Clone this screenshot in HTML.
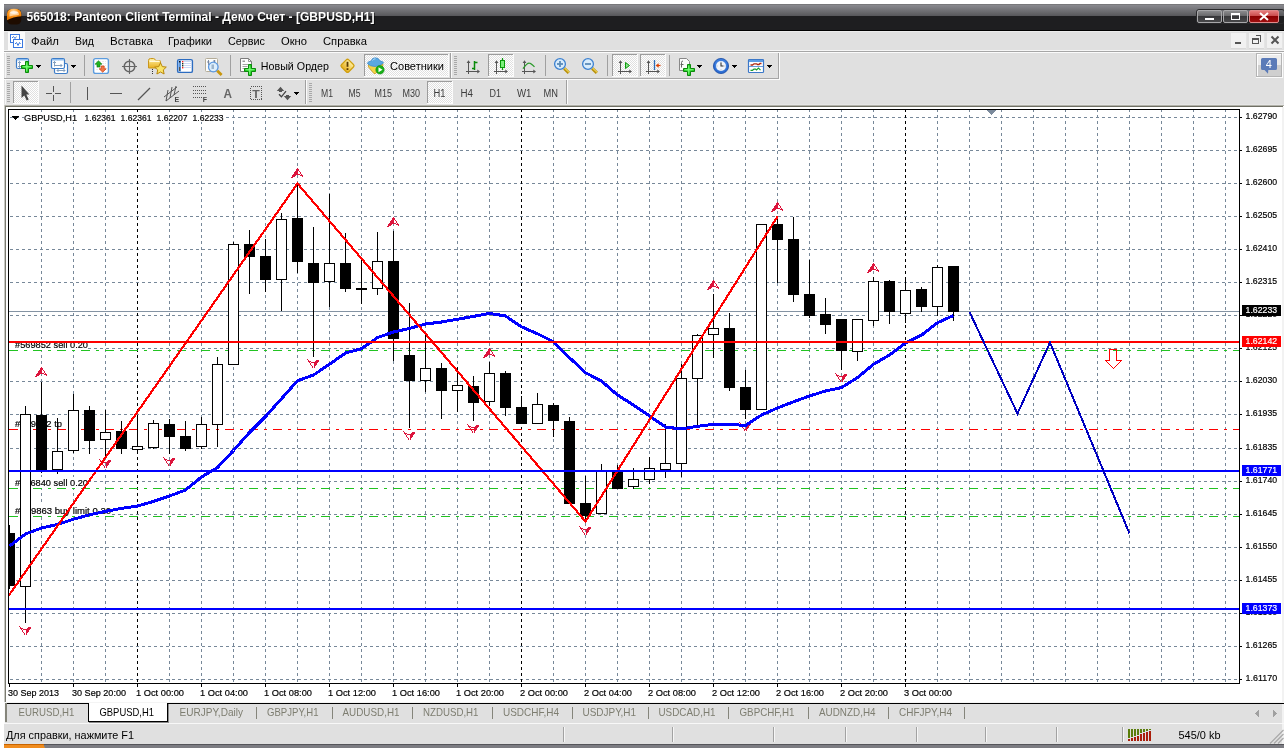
<!DOCTYPE html>
<html><head><meta charset="utf-8"><title>565018: Panteon Client Terminal - [GBPUSD,H1]</title>
<style>
html,body{margin:0;padding:0;background:#fff;width:1288px;height:748px;overflow:hidden}
svg{display:block;will-change:transform;font-family:'Liberation Sans', sans-serif;}
text{white-space:pre}
</style></head><body>
<svg width="1288" height="748" viewBox="0 0 1288 748" shape-rendering="crispEdges" font-family='"Liberation Sans", sans-serif'>
<defs>
<linearGradient id="tg" x1="0" y1="0" x2="0" y2="1">
 <stop offset="0" stop-color="#8e8e93"/><stop offset="0.5" stop-color="#737377"/><stop offset="1" stop-color="#57575a"/>
</linearGradient>
<linearGradient id="btn" x1="0" y1="0" x2="0" y2="1">
 <stop offset="0" stop-color="#8e8e90"/><stop offset="0.48" stop-color="#666668"/><stop offset="0.5" stop-color="#38383a"/><stop offset="1" stop-color="#4a4a4c"/>
</linearGradient>
<linearGradient id="btnr" x1="0" y1="0" x2="0" y2="1">
 <stop offset="0" stop-color="#e88080"/><stop offset="0.48" stop-color="#c84848"/><stop offset="0.5" stop-color="#8c0000"/><stop offset="1" stop-color="#a01010"/>
</linearGradient>
<radialGradient id="ico" cx="0.45" cy="0.2" r="0.7">
 <stop offset="0" stop-color="#ffd9a0"/><stop offset="0.5" stop-color="#ff9a20"/><stop offset="1" stop-color="#e87800"/>
</radialGradient>
<pattern id="chk" width="2" height="2" patternUnits="userSpaceOnUse">
 <rect width="2" height="2" fill="#ffffff"/><rect width="1" height="1" fill="#e0e0e0"/><rect x="1" y="1" width="1" height="1" fill="#e0e0e0"/>
</pattern>
<linearGradient id="blu" x1="0" y1="0" x2="0" y2="1"><stop offset="0" stop-color="#9cc4f0"/><stop offset="1" stop-color="#3c7ccc"/></linearGradient>
<linearGradient id="grn" x1="0" y1="0" x2="0" y2="1"><stop offset="0" stop-color="#5ce05c"/><stop offset="1" stop-color="#0a9a0a"/></linearGradient>
<linearGradient id="yel" x1="0" y1="0" x2="0" y2="1"><stop offset="0" stop-color="#fff0a0"/><stop offset="1" stop-color="#e8b020"/></linearGradient>
</defs>
<rect x="4" y="4" width="1280" height="744" fill="#e0e0e0" />
<rect x="4" y="4" width="1280" height="12" fill="url(#tg)" />
<rect x="4" y="16" width="1280" height="14" fill="#1e1e20" />
<rect x="4" y="30" width="1280" height="1" fill="#000" />
<rect x="4" y="4" width="1280" height="1" fill="#78787b" />
<g shape-rendering="auto"><rect x="7" y="9" width="14.300" height="15.500" rx="5" ry="4.500" fill="#1e0c00"/><path d="M7,20.300 V14 Q7,8.800 14,8.800 Q21.300,8.800 21.300,14 V16.300 Q13,16.800 7,20.300 Z" fill="url(#ico)"/><path d="M9.500,16.500 V13.500 Q9.500,11.300 14,11.300 Q18.800,11.300 18.800,13.500 V15 Q13,15.200 9.500,16.500 Z" fill="#fff" fill-opacity="0.550"/><ellipse cx="14" cy="12.600" rx="3.800" ry="1.300" fill="#fff" fill-opacity="0.600"/></g>
<g shape-rendering="auto">
<text x="27.5" y="22" font-size="12.5" fill="#000" textLength="348" lengthAdjust="spacingAndGlyphs" font-weight="bold" fill-opacity="0.550">565018: Panteon Client Terminal - Демо Счет - [GBPUSD,H1]</text>
<text x="26.5" y="21" font-size="12.5" fill="#fff" textLength="348" lengthAdjust="spacingAndGlyphs" font-weight="bold" >565018: Panteon Client Terminal - Демо Счет - [GBPUSD,H1]</text>
</g>
<g shape-rendering="auto">
<rect x="1196.5" y="9.500" width="88" height="14" rx="2.5" fill="none" stroke="#2a2a2c"/>
<rect x="1197.500" y="10.500" width="24" height="12" rx="1.5" fill="url(#btn)" stroke="#a8a8aa" stroke-width="1"/>
<rect x="1223.500" y="10.500" width="24" height="12" rx="1.5" fill="url(#btn)" stroke="#a8a8aa" stroke-width="1"/>
<rect x="1249.500" y="10.500" width="29" height="12" rx="1.5" fill="url(#btnr)" stroke="#e08a8a" stroke-width="1"/>
</g>
<rect x="1205" y="18" width="9" height="2" fill="#fff" />
<rect x="1231.5" y="13.500" width="8" height="6" fill="none" stroke="#fff" stroke-width="1"/>
<rect x="1231" y="13" width="9" height="2" fill="#fff" />
<g shape-rendering="auto"><path d="M1260,13 L1268,20 M1268,13 L1260,20" stroke="#fff" stroke-width="2" fill="none"/></g>
<rect x="4" y="31" width="1280" height="1" fill="#ececec" />
<rect x="8" y="32" width="17" height="18" fill="#fbfbfb" />
<g fill="#fff" stroke="#3a78e0" stroke-width="1"><rect x="10.500" y="34.500" width="9" height="8"/><rect x="13.500" y="39.500" width="9" height="8"/></g>
<g shape-rendering="auto" fill="none" stroke="#3a78e0" stroke-width="1"><path d="M15,44 l1.500,-1.500 l1.500,3 l1.500,-3 l1,1.500"/><path d="M12,38 l1.500,-1.500 l1.500,2 l1.500,-2"/></g>
<g shape-rendering="auto">
<text x="31" y="45" font-size="11" fill="#000" textLength="28" lengthAdjust="spacingAndGlyphs" >Файл</text>
<text x="75" y="45" font-size="11" fill="#000" textLength="19" lengthAdjust="spacingAndGlyphs" >Вид</text>
<text x="110" y="45" font-size="11" fill="#000" textLength="43" lengthAdjust="spacingAndGlyphs" >Вставка</text>
<text x="168" y="45" font-size="11" fill="#000" textLength="44" lengthAdjust="spacingAndGlyphs" >Графики</text>
<text x="228" y="45" font-size="11" fill="#000" textLength="37" lengthAdjust="spacingAndGlyphs" >Сервис</text>
<text x="281" y="45" font-size="11" fill="#000" textLength="26" lengthAdjust="spacingAndGlyphs" >Окно</text>
<text x="323" y="45" font-size="11" fill="#000" textLength="44" lengthAdjust="spacingAndGlyphs" >Справка</text>
</g>
<rect x="1231" y="33" width="16" height="16" fill="#f1f1f1" />
<rect x="1231" y="48" width="16" height="1" fill="#d8d8d8" />
<rect x="1246" y="33" width="1" height="16" fill="#e4e4e4" />
<rect x="1249" y="33" width="16" height="16" fill="#f1f1f1" />
<rect x="1249" y="48" width="16" height="1" fill="#d8d8d8" />
<rect x="1264" y="33" width="1" height="16" fill="#e4e4e4" />
<rect x="1267" y="33" width="16" height="16" fill="#f1f1f1" />
<rect x="1267" y="48" width="16" height="1" fill="#d8d8d8" />
<rect x="1282" y="33" width="1" height="16" fill="#e4e4e4" />
<rect x="1235" y="42" width="6" height="2" fill="#555" />
<g fill="none" stroke="#555" stroke-width="1"><path d="M1255.500,35.500 h5 v6"/><rect x="1252.500" y="38.500" width="6" height="5"/></g>
<rect x="1252" y="38" width="7" height="2" fill="#555" />
<g shape-rendering="auto"><path d="M1271.500,36.500 l7,7 M1278.500,36.500 l-7,7" stroke="#555" stroke-width="2" fill="none"/></g>
<rect x="4" y="50" width="1280" height="1" fill="#f6f6f6" />
<rect x="4" y="51" width="1280" height="1" fill="#a6a6a6" />
<rect x="4" y="52" width="1280" height="1" fill="#fbfbfb" />
<rect x="4" y="78" width="1280" height="1" fill="#a6a6a6" />
<rect x="4" y="79" width="1280" height="1" fill="#fbfbfb" />
<rect x="779" y="53" width="505" height="27" fill="#e0e0e0" />
<rect x="778" y="53" width="1" height="26" fill="#a6a6a6" />
<rect x="779" y="53" width="1" height="27" fill="#fbfbfb" />
<rect x="5" y="80" width="1" height="25" fill="#f6f6f6" />
<rect x="5" y="53" width="1" height="25" fill="#f6f6f6" />
<defs><radialGradient id="grn2" cx="0.5" cy="0.5" r="0.6"><stop offset="0" stop-color="#58f058"/><stop offset="1" stop-color="#0cb40c"/></radialGradient></defs>
<rect x="7" y="56" width="3" height="1" fill="#a8a8a8" />
<rect x="7" y="58" width="3" height="1" fill="#a8a8a8" />
<rect x="7" y="60" width="3" height="1" fill="#a8a8a8" />
<rect x="7" y="62" width="3" height="1" fill="#a8a8a8" />
<rect x="7" y="64" width="3" height="1" fill="#a8a8a8" />
<rect x="7" y="66" width="3" height="1" fill="#a8a8a8" />
<rect x="7" y="68" width="3" height="1" fill="#a8a8a8" />
<rect x="7" y="70" width="3" height="1" fill="#a8a8a8" />
<rect x="7" y="72" width="3" height="1" fill="#a8a8a8" />
<rect x="7" y="74" width="3" height="1" fill="#a8a8a8" />
<g shape-rendering="auto">
<rect x="16.500" y="58.500" width="12" height="10" rx="1.500" fill="#ffffff" stroke="#3c7cc8" stroke-width="1.200"/><rect x="17" y="59" width="11" height="1.500" fill="#8cbcf0"/><path d="M19.500,61.500 v6 M18,63 l1.500,-1.500 l1.500,1.500 M18,66 l1.500,1.500 l1.500,-1.500" stroke="#7896b8" fill="none" stroke-width="0.900"/>
<path d="M25.5,61.5 h3 v4 h4 v3 h-4 v4 h-3 v-4 h-4 v-3 h4 Z" fill="url(#grn2)" stroke="#0a8a0a" stroke-width="1"/><path d="M26.5,62.5 v9 M22.5,66.5 h9" stroke="#7dff7d" stroke-width="1" stroke-opacity="0.700" fill="none"/>
<rect x="54.500" y="63.500" width="13" height="10" rx="1.500" fill="#ffffff" stroke="#3c7cc8" stroke-width="1.200"/><path d="M57,70.500 h8 M57,70.500 l1.500,-1.500 M57,70.500 l1.500,1.500 M65,70.500 l-1.500,-1.500 M65,70.500 l-1.500,1.500" stroke="#7896b8" fill="none" stroke-width="0.900"/><rect x="51.500" y="58.500" width="13" height="10" rx="1.500" fill="#ffffff" stroke="#3c7cc8" stroke-width="1.200"/><rect x="52" y="59" width="12" height="1.500" fill="#8cbcf0"/><path d="M54.500,61.500 v5 M53,63 l1.500,-1.500 l1.500,1.500 M54.500,65.500 h7.500 M60.500,64 l1.500,1.500 l-1.500,1.500" stroke="#7896b8" fill="none" stroke-width="0.900"/>
<rect x="93.600" y="58.600" width="14.800" height="14.800" rx="2" fill="#ffffff" stroke="#5c9cde" stroke-width="1.400"/><path d="M96,61.500 h10 M96,63.500 h10 M96,65.500 h10 M96,67.500 h10 M96,69.500 h10" stroke="#e4e4e8" stroke-width="0.800" stroke-dasharray="2 1"/><path d="M98.500,60.800 l3.500,3.400 h-2 v2.800 h-3 v-2.800 h-2 Z" fill="#22b422" stroke="#0a7a0a" stroke-width="0.600"/><path d="M102.700,72.200 l3.500,-3.400 h-2 v-2.800 h-3 v2.800 h-2 Z" fill="#f07848" stroke="#d03808" stroke-width="0.700"/>
<circle cx="129.500" cy="66.500" r="5.300" fill="none" stroke="#666" stroke-width="1.500"/><path d="M129.500,59 v15 M122,66.500 h15" stroke="#666" stroke-width="1.100"/>
<path d="M148.500,60.500 q0,-2 2,-2 h3 q1.500,0 2,2 h4 q1,0 1,1 v6.500 h-12 Z" fill="url(#yel)" stroke="#c8961e" stroke-width="1"/><rect x="149.500" y="60.500" width="10" height="1.500" fill="#fffbe0"/><path d="M160.500,62.800 l1.800,3.800 l4,0.500 l-3,2.800 l0.800,4.100 l-3.600,-2 l-3.600,2 l0.800,-4.100 l-3,-2.800 l4,-0.500 Z" fill="#fae468" stroke="#b8860b" stroke-width="1"/>
<rect x="177.600" y="59.600" width="14.800" height="12.800" rx="1.500" fill="#fff" stroke="#2c6cc0" stroke-width="1.400"/><rect x="178.500" y="60.500" width="2.500" height="11" fill="#5c98e0"/><rect x="179" y="67" width="1.200" height="4" fill="#555"/><path d="M184,61.500 h7.500 M184,63.500 h7.500 M184,65.500 h7.500 M184,67.500 h7.500" stroke="#c4d4f4" stroke-width="0.900"/><rect x="182" y="61" width="1.400" height="1.400" fill="#f02020"/><rect x="182" y="63" width="1.400" height="1.400" fill="#223322"/><rect x="182" y="65" width="1.400" height="1.400" fill="#223322"/><rect x="182" y="67" width="1.400" height="1.400" fill="#f02020"/><rect x="179" y="61" width="1.400" height="1.400" fill="#111"/>
<rect x="205.500" y="58.500" width="12" height="13" rx="1" fill="#fdfdfb" stroke="#b4ac98"/><path d="M208.500,60 v5 M207,62 h2.500 M214.500,60 v4 M213,61 h2.500" stroke="#70809a" fill="none" stroke-width="0.900"/><circle cx="213.300" cy="67" r="4.800" fill="#d8ecfc" fill-opacity="0.900" stroke="#5c98e0" stroke-width="1.300"/><rect x="211.500" y="64.500" width="2.500" height="4.500" fill="#9cb4cc"/><path d="M217.300,70.800 l4.300,4.300" stroke="#c8960e" stroke-width="2.800" stroke-linecap="butt"/>
<path d="M240.500,58.500 h8 l3,3 v10 h-11 Z" fill="#fdfdfd" stroke="#7c7c7c"/><path d="M248.500,58.500 v3 h3" fill="none" stroke="#7c7c7c" stroke-width="0.800"/><rect x="242.500" y="60.500" width="2.500" height="1.500" fill="#999"/><path d="M242.500,64.500 h6 M242.500,66.500 h5 M242.500,68.500 h3" stroke="#999" stroke-width="0.900"/>
<path d="M248.5,64.5 h3 v4 h4 v3 h-4 v4 h-3 v-4 h-4 v-3 h4 Z" fill="url(#grn2)" stroke="#0a8a0a" stroke-width="1"/><path d="M249.5,65.5 v9 M245.5,69.5 h9" stroke="#7dff7d" stroke-width="1" stroke-opacity="0.700" fill="none"/>
<text x="260.8" y="70" font-size="11" fill="#000" textLength="68.2" lengthAdjust="spacingAndGlyphs" >Новый Ордер</text>
<rect x="342.400" y="60.700" width="10.200" height="10.200" rx="1.800" transform="rotate(45 347.500 65.800)" fill="url(#yel)" stroke="#d0a010" stroke-width="1.300"/><path d="M347.500,61.800 v5" stroke="#5a3a00" stroke-width="1.800"/><rect x="346.600" y="68.200" width="1.800" height="1.800" fill="#5a3a00"/>
</g>
<rect x="152" y="69" width="1" height="1" fill="#333" />
<rect x="152" y="71" width="1" height="1" fill="#333" />
<rect x="152" y="73" width="1" height="1" fill="#333" />
<rect x="36" y="65" width="5" height="1" fill="#000" />
<rect x="37" y="66" width="3" height="1" fill="#000" />
<rect x="38" y="67" width="1" height="1" fill="#000" />
<rect x="71" y="65" width="5" height="1" fill="#000" />
<rect x="72" y="66" width="3" height="1" fill="#000" />
<rect x="73" y="67" width="1" height="1" fill="#000" />
<rect x="84" y="55" width="1" height="21" fill="#a0a0a0" />
<rect x="230" y="55" width="1" height="21" fill="#a0a0a0" />
<rect x="364" y="54" width="85" height="23" fill="url(#chk)" />
<rect x="364" y="54" width="85" height="1" fill="#9c9c9c" />
<rect x="364" y="54" width="1" height="23" fill="#9c9c9c" />
<rect x="364" y="76" width="85" height="1" fill="#fbfbfb" />
<rect x="448" y="54" width="1" height="23" fill="#fbfbfb" />
<g shape-rendering="auto"><path d="M368.500,64 h14.500 l-0.500,3 l-7,6.500 h-1.500 l-5.500,-6.500 Z" fill="#f4d448" stroke="#c89820" stroke-width="0.800"/><path d="M367.300,63.500 q0.700,-2.500 4,-2.500 q0.500,-3.200 4,-3.200 q3.500,0 4.500,3 q3.500,0.500 3.700,2.200 q-4,3.500 -8.500,3.500 q-5,0 -7.700,-3 Z" fill="#5aa8e2" stroke="#3c88c8" stroke-width="0.700"/><path d="M372.500,60.500 q1,-1.800 3,-1.800" stroke="#b4dcf8" stroke-width="1" fill="none"/><circle cx="380" cy="69.800" r="4.200" fill="#18b018" stroke="#0c8c0c" stroke-width="0.600"/><path d="M378.500,67.300 l4,2.500 l-4,2.500 Z" fill="#fff"/>
<text x="390" y="70" font-size="11" fill="#000" textLength="54" lengthAdjust="spacingAndGlyphs" >Советники</text>
</g>
<rect x="451" y="53" width="1" height="25" fill="#fbfbfb" />
<rect x="450" y="53" width="1" height="25" fill="#a0a0a0" />
<rect x="454" y="56" width="3" height="1" fill="#a8a8a8" />
<rect x="454" y="58" width="3" height="1" fill="#a8a8a8" />
<rect x="454" y="60" width="3" height="1" fill="#a8a8a8" />
<rect x="454" y="62" width="3" height="1" fill="#a8a8a8" />
<rect x="454" y="64" width="3" height="1" fill="#a8a8a8" />
<rect x="454" y="66" width="3" height="1" fill="#a8a8a8" />
<rect x="454" y="68" width="3" height="1" fill="#a8a8a8" />
<rect x="454" y="70" width="3" height="1" fill="#a8a8a8" />
<rect x="454" y="72" width="3" height="1" fill="#a8a8a8" />
<rect x="454" y="74" width="3" height="1" fill="#a8a8a8" />
<g shape-rendering="auto">
<path d="M468.5,61 v13 M466,71.5 h13" fill="none" stroke="#555" stroke-width="1"/><path d="M468.5,60.2 l1.900,2.700 h-3.800 Z M480,71.5 l-2.700,-1.900 v3.800 Z" fill="#555"/>
<path d="M474.500,61 v9 M472,68.500 h2.500 M474.500,62.500 h3" stroke="#0a8a0a" stroke-width="1.500" fill="none"/>
</g>
<rect x="488" y="54" width="26" height="23" fill="url(#chk)" />
<rect x="488" y="54" width="26" height="1" fill="#9c9c9c" />
<rect x="488" y="54" width="1" height="23" fill="#9c9c9c" />
<rect x="488" y="76" width="26" height="1" fill="#fbfbfb" />
<rect x="513" y="54" width="1" height="23" fill="#fbfbfb" />
<g shape-rendering="auto">
<path d="M496.5,61 v13 M494,71.5 h13" fill="none" stroke="#555" stroke-width="1"/><path d="M496.5,60.2 l1.900,2.700 h-3.800 Z M508,71.5 l-2.700,-1.900 v3.800 Z" fill="#555"/>
<path d="M502.500,58 v12" stroke="#0a9a0a" stroke-width="1.200"/><rect x="500.500" y="60.500" width="4" height="7" fill="#7df07d" stroke="#0a9a0a" stroke-width="1"/>
<path d="M524.5,61 v13 M522,71.5 h13" fill="none" stroke="#555" stroke-width="1"/><path d="M524.5,60.2 l1.900,2.700 h-3.800 Z M536,71.5 l-2.700,-1.900 v3.800 Z" fill="#555"/>
<path d="M523,68.600 q4,-5.600 6.300,-5.400 q1.600,0.100 5.200,3.700" stroke="#2a9a2a" stroke-width="1.300" fill="none"/>
<path d="M564.2,68.400 l4.600,4.400" stroke="#b8900c" stroke-width="3.200" stroke-linecap="butt"/><path d="M564.6,68 l4.600,4.400" stroke="#ecd050" stroke-width="1.200" stroke-linecap="butt"/><circle cx="560" cy="64" r="5.400" fill="#d8ecfc" stroke="#3c80d0" stroke-width="1.300"/><path d="M557,64 h6" stroke="#5c8cb8" stroke-width="1.800"/>
<path d="M560,61 v6" stroke="#5c8cb8" stroke-width="1.800"/>
<path d="M592.2,68.400 l4.600,4.400" stroke="#b8900c" stroke-width="3.200" stroke-linecap="butt"/><path d="M592.6,68 l4.600,4.400" stroke="#ecd050" stroke-width="1.200" stroke-linecap="butt"/><circle cx="588" cy="64" r="5.400" fill="#d8ecfc" stroke="#3c80d0" stroke-width="1.300"/><path d="M585,64 h6" stroke="#5c8cb8" stroke-width="1.800"/>
</g>
<rect x="545" y="55" width="1" height="21" fill="#a0a0a0" />
<rect x="607" y="55" width="1" height="21" fill="#a0a0a0" />
<rect x="612" y="54" width="26" height="23" fill="url(#chk)" />
<rect x="612" y="54" width="26" height="1" fill="#9c9c9c" />
<rect x="612" y="54" width="1" height="23" fill="#9c9c9c" />
<rect x="612" y="76" width="26" height="1" fill="#fbfbfb" />
<rect x="637" y="54" width="1" height="23" fill="#fbfbfb" />
<rect x="640" y="54" width="26" height="23" fill="url(#chk)" />
<rect x="640" y="54" width="26" height="1" fill="#9c9c9c" />
<rect x="640" y="54" width="1" height="23" fill="#9c9c9c" />
<rect x="640" y="76" width="26" height="1" fill="#fbfbfb" />
<rect x="665" y="54" width="1" height="23" fill="#fbfbfb" />
<g shape-rendering="auto">
<path d="M620.5,61 v13 M618,71.5 h13" fill="none" stroke="#555" stroke-width="1"/><path d="M620.5,60.2 l1.900,2.700 h-3.800 Z M632,71.5 l-2.700,-1.900 v3.800 Z" fill="#555"/>
<path d="M625.500,62.500 l4,3 l-4,3 Z" fill="#8ce08c" stroke="#0a9a0a" stroke-width="1"/>
<path d="M648.5,61 v13 M646,71.5 h13" fill="none" stroke="#555" stroke-width="1"/><path d="M648.5,60.2 l1.900,2.700 h-3.800 Z M660,71.5 l-2.700,-1.900 v3.800 Z" fill="#555"/>
<path d="M654.500,60 v10" stroke="#2c6cb8" stroke-width="1.300"/><path d="M660.500,65.500 h-4" stroke="#e04000" stroke-width="1.200" fill="none"/><path d="M655.800,65.500 l2.800,-2.300 v4.600 Z" fill="#e04000"/>
</g>
<rect x="669" y="55" width="1" height="21" fill="#a0a0a0" />
<g shape-rendering="auto">
<path d="M679.500,58.500 h7 l3,3 v9 h-10 Z" fill="#fcfcfc" stroke="#888"/><path d="M683,61 q-1.500,0 -1.500,1.500 v5" stroke="#666" fill="none"/><path d="M680.500,64.500 h3" stroke="#666"/>
<path d="M687.5,64.5 h3 v4 h4 v3 h-4 v4 h-3 v-4 h-4 v-3 h4 Z" fill="url(#grn2)" stroke="#0a8a0a" stroke-width="1"/><path d="M688.5,65.5 v9 M684.5,69.5 h9" stroke="#7dff7d" stroke-width="1" stroke-opacity="0.700" fill="none"/>
<circle cx="721" cy="66" r="7.600" fill="#2a6ad0" stroke="#1a4ca4" stroke-width="0.800"/><circle cx="721" cy="65.300" r="6.300" fill="#4a8ae6" fill-opacity="0.600"/><circle cx="721" cy="66" r="5" fill="#f0f4fa"/><path d="M721,62.500 v3.500 h2.500" stroke="#333" stroke-width="1.100" fill="none"/><path d="M721,61.700 v0.800 M721,69.500 v0.800 M716.700,66 h0.800 M724.500,66 h0.800" stroke="#8898b0" stroke-width="0.800"/>
<rect x="748.500" y="59.500" width="15" height="13" rx="0.800" fill="#fdfeff" stroke="#3c78c8" stroke-width="1.200"/><rect x="749" y="60" width="14" height="2" fill="#5c9ce4"/><path d="M749,66.500 h14" stroke="#6c9cdc" stroke-width="1"/><path d="M750.500,65 h2 l1.500,-1.200 h2.500 l1,0.700 h1.500 l1,-1 h1.500" stroke="#b02810" stroke-width="1.300" fill="none"/><path d="M750.500,70.300 h2 l1.500,-1.200 h1.500 l1,0.800 l2,-1.800 l2,2" stroke="#1c9c2c" stroke-width="1.200" fill="none"/>
</g>
<rect x="697" y="65" width="5" height="1" fill="#000" />
<rect x="698" y="66" width="3" height="1" fill="#000" />
<rect x="699" y="67" width="1" height="1" fill="#000" />
<rect x="732" y="65" width="5" height="1" fill="#000" />
<rect x="733" y="66" width="3" height="1" fill="#000" />
<rect x="734" y="67" width="1" height="1" fill="#000" />
<rect x="767" y="65" width="5" height="1" fill="#000" />
<rect x="768" y="66" width="3" height="1" fill="#000" />
<rect x="769" y="67" width="1" height="1" fill="#000" />
<rect x="1256" y="53" width="26" height="24" fill="#b4b4b4" />
<rect x="1257" y="54" width="24" height="22" fill="#fdfdfd" />
<rect x="1258" y="55" width="23" height="10" fill="#ececec" />
<rect x="1258" y="65" width="23" height="11" fill="#cfcfcf" />
<rect x="1256" y="77" width="27" height="1" fill="#fbfbfb" />
<rect x="1282" y="53" width="1" height="25" fill="#fbfbfb" />
<g shape-rendering="auto"><path d="M1262.500,58 h13 q1.500,0 1.500,1.500 v9 q0,1.500 -1.500,1.500 h-7.200 l-0.300,3.800 l-3.500,-3.800 h-2 q-1.500,0 -1.500,-1.500 v-9 q0,-1.500 1.500,-1.500 Z" fill="#5b7bb8"/>
<text x="1265.8" y="68" font-size="11" fill="#fff" >4</text>
</g>
<rect x="7" y="83" width="3" height="1" fill="#a8a8a8" />
<rect x="7" y="85" width="3" height="1" fill="#a8a8a8" />
<rect x="7" y="87" width="3" height="1" fill="#a8a8a8" />
<rect x="7" y="89" width="3" height="1" fill="#a8a8a8" />
<rect x="7" y="91" width="3" height="1" fill="#a8a8a8" />
<rect x="7" y="93" width="3" height="1" fill="#a8a8a8" />
<rect x="7" y="95" width="3" height="1" fill="#a8a8a8" />
<rect x="7" y="97" width="3" height="1" fill="#a8a8a8" />
<rect x="7" y="99" width="3" height="1" fill="#a8a8a8" />
<rect x="7" y="101" width="3" height="1" fill="#a8a8a8" />
<rect x="13" y="81" width="26" height="23" fill="url(#chk)" />
<rect x="13" y="81" width="26" height="1" fill="#9c9c9c" />
<rect x="13" y="81" width="1" height="23" fill="#9c9c9c" />
<rect x="13" y="103" width="26" height="1" fill="#fbfbfb" />
<rect x="38" y="81" width="1" height="23" fill="#fbfbfb" />
<g shape-rendering="auto">
<path d="M21.500,85.500 V98 l2.800,-2.600 l2.400,5 l2,-1 l-2.400,-4.900 H29.400 Z" fill="#444"/>
</g>
<path d="M53.500,86 v6 M53.500,95 v6 M46,93.500 h6 M55,93.500 h6" stroke="#555" stroke-width="1" fill="none"/>
<rect x="70" y="82" width="1" height="21" fill="#a0a0a0" />
<line x1="87.5" y1="87" x2="87.5" y2="100" stroke="#555" stroke-width="1"/>
<line x1="110" y1="93.5" x2="122" y2="93.5" stroke="#555" stroke-width="1"/>
<g shape-rendering="auto">
<path d="M138,100 L150,88" stroke="#555" stroke-width="1.200"/>
<path d="M164,97 l13,-10 M166,101 l13,-10 M168,90 l-2,11 M172,87 l-2,11 M176,86 l-2,9" stroke="#555" stroke-width="1" fill="none"/>
<text x="174.5" y="101.8" font-size="7" fill="#444" font-weight="bold" >E</text>
<path d="M193,86.500 h13 M193,90.500 h13 M193,93.500 h13 M193,97.500 h9" stroke="#555" stroke-width="1" stroke-dasharray="1 1" fill="none"/>
<text x="202.8" y="101.8" font-size="7" fill="#444" font-weight="bold" >F</text>
<text x="223.5" y="98" font-size="12" fill="#666" textLength="8.5" lengthAdjust="spacingAndGlyphs" font-weight="bold" >A</text>
</g>
<rect x="250.500" y="86.500" width="11" height="13" fill="none" stroke="#555" stroke-dasharray="1 1"/>
<g shape-rendering="auto">
<text x="252.3" y="97.5" font-size="11" fill="#666" textLength="7.5" lengthAdjust="spacingAndGlyphs" font-weight="bold" >T</text>
<path d="M280.500,86.800 L284.200,91 H282 V92 H279 V91 H276.800 Z M287.500,100.200 L283.800,96 H286 V95 H289 V96 H291.200 Z" fill="#555"/><path d="M279,94.300 L281.400,96.800 L286,91.200" stroke="#444" stroke-width="1.300" fill="none"/>
</g>
<rect x="294" y="92" width="5" height="1" fill="#000" />
<rect x="295" y="93" width="3" height="1" fill="#000" />
<rect x="296" y="94" width="1" height="1" fill="#000" />
<rect x="306" y="80" width="1" height="25" fill="#fbfbfb" />
<rect x="305" y="80" width="1" height="25" fill="#a0a0a0" />
<rect x="309" y="83" width="3" height="1" fill="#a8a8a8" />
<rect x="309" y="85" width="3" height="1" fill="#a8a8a8" />
<rect x="309" y="87" width="3" height="1" fill="#a8a8a8" />
<rect x="309" y="89" width="3" height="1" fill="#a8a8a8" />
<rect x="309" y="91" width="3" height="1" fill="#a8a8a8" />
<rect x="309" y="93" width="3" height="1" fill="#a8a8a8" />
<rect x="309" y="95" width="3" height="1" fill="#a8a8a8" />
<rect x="309" y="97" width="3" height="1" fill="#a8a8a8" />
<rect x="309" y="99" width="3" height="1" fill="#a8a8a8" />
<rect x="309" y="101" width="3" height="1" fill="#a8a8a8" />
<rect x="427" y="81" width="26" height="23" fill="url(#chk)" />
<rect x="427" y="81" width="26" height="1" fill="#9c9c9c" />
<rect x="427" y="81" width="1" height="23" fill="#9c9c9c" />
<rect x="427" y="103" width="26" height="1" fill="#fbfbfb" />
<rect x="452" y="81" width="1" height="23" fill="#fbfbfb" />
<g shape-rendering="auto">
<text x="321" y="97" font-size="10" fill="#3c3c3c" textLength="12" lengthAdjust="spacingAndGlyphs" >M1</text>
<text x="348.5" y="97" font-size="10" fill="#3c3c3c" textLength="12" lengthAdjust="spacingAndGlyphs" >M5</text>
<text x="374.5" y="97" font-size="10" fill="#3c3c3c" textLength="17.5" lengthAdjust="spacingAndGlyphs" >M15</text>
<text x="402.5" y="97" font-size="10" fill="#3c3c3c" textLength="17.5" lengthAdjust="spacingAndGlyphs" >M30</text>
<text x="433.5" y="97" font-size="10" fill="#3c3c3c" textLength="12" lengthAdjust="spacingAndGlyphs" >H1</text>
<text x="460.5" y="97" font-size="10" fill="#3c3c3c" textLength="12.5" lengthAdjust="spacingAndGlyphs" >H4</text>
<text x="489.5" y="97" font-size="10" fill="#3c3c3c" textLength="11.5" lengthAdjust="spacingAndGlyphs" >D1</text>
<text x="517" y="97" font-size="10" fill="#3c3c3c" textLength="14.5" lengthAdjust="spacingAndGlyphs" >W1</text>
<text x="543.5" y="97" font-size="10" fill="#3c3c3c" textLength="14.5" lengthAdjust="spacingAndGlyphs" >MN</text>
</g>
<rect x="567" y="80" width="1" height="25" fill="#fbfbfb" />
<rect x="566" y="80" width="1" height="25" fill="#a0a0a0" />
<rect x="4" y="105" width="1280" height="597" fill="#ffffff" />
<rect x="4" y="104" width="1280" height="1" fill="#e6e6e6" />
<rect x="4" y="105" width="1280" height="1" fill="#b2b2aa" />
<rect x="4" y="106" width="1279" height="1" fill="#6f6f64" />
<rect x="4" y="105" width="1" height="597" fill="#c9c9c3" />
<rect x="5" y="106" width="1" height="596" fill="#7a7a70" />
<rect x="1282" y="107" width="2" height="595" fill="#f1f1f1" />
<clipPath id="cc"><rect x="9" y="110" width="1230" height="573"/></clipPath>
<g clip-path="url(#cc)">
<line x1="9" y1="117.5" x2="1239" y2="117.5" stroke="#778899" stroke-width="1" stroke-dasharray="3 3" stroke-dashoffset="5"/>
<line x1="9" y1="150.5" x2="1239" y2="150.5" stroke="#778899" stroke-width="1" stroke-dasharray="3 3" stroke-dashoffset="5"/>
<line x1="9" y1="183.5" x2="1239" y2="183.5" stroke="#778899" stroke-width="1" stroke-dasharray="3 3" stroke-dashoffset="5"/>
<line x1="9" y1="216.5" x2="1239" y2="216.5" stroke="#778899" stroke-width="1" stroke-dasharray="3 3" stroke-dashoffset="5"/>
<line x1="9" y1="249.5" x2="1239" y2="249.5" stroke="#778899" stroke-width="1" stroke-dasharray="3 3" stroke-dashoffset="5"/>
<line x1="9" y1="282.5" x2="1239" y2="282.5" stroke="#778899" stroke-width="1" stroke-dasharray="3 3" stroke-dashoffset="5"/>
<line x1="9" y1="315.5" x2="1239" y2="315.5" stroke="#778899" stroke-width="1" stroke-dasharray="3 3" stroke-dashoffset="5"/>
<line x1="9" y1="348.5" x2="1239" y2="348.5" stroke="#778899" stroke-width="1" stroke-dasharray="3 3" stroke-dashoffset="5"/>
<line x1="9" y1="381.5" x2="1239" y2="381.5" stroke="#778899" stroke-width="1" stroke-dasharray="3 3" stroke-dashoffset="5"/>
<line x1="9" y1="414.5" x2="1239" y2="414.5" stroke="#778899" stroke-width="1" stroke-dasharray="3 3" stroke-dashoffset="5"/>
<line x1="9" y1="448.5" x2="1239" y2="448.5" stroke="#778899" stroke-width="1" stroke-dasharray="3 3" stroke-dashoffset="5"/>
<line x1="9" y1="481.5" x2="1239" y2="481.5" stroke="#778899" stroke-width="1" stroke-dasharray="3 3" stroke-dashoffset="5"/>
<line x1="9" y1="514.5" x2="1239" y2="514.5" stroke="#778899" stroke-width="1" stroke-dasharray="3 3" stroke-dashoffset="5"/>
<line x1="9" y1="547.5" x2="1239" y2="547.5" stroke="#778899" stroke-width="1" stroke-dasharray="3 3" stroke-dashoffset="5"/>
<line x1="9" y1="580.5" x2="1239" y2="580.5" stroke="#778899" stroke-width="1" stroke-dasharray="3 3" stroke-dashoffset="5"/>
<line x1="9" y1="613.5" x2="1239" y2="613.5" stroke="#778899" stroke-width="1" stroke-dasharray="3 3" stroke-dashoffset="5"/>
<line x1="9" y1="646.5" x2="1239" y2="646.5" stroke="#778899" stroke-width="1" stroke-dasharray="3 3" stroke-dashoffset="5"/>
<line x1="9" y1="679.5" x2="1239" y2="679.5" stroke="#778899" stroke-width="1" stroke-dasharray="3 3" stroke-dashoffset="5"/>
<line x1="41.5" y1="110" x2="41.5" y2="683" stroke="#778899" stroke-width="1" stroke-dasharray="3 3" stroke-dashoffset="1"/>
<line x1="73.5" y1="110" x2="73.5" y2="683" stroke="#778899" stroke-width="1" stroke-dasharray="3 3" stroke-dashoffset="1"/>
<line x1="105.5" y1="110" x2="105.5" y2="683" stroke="#778899" stroke-width="1" stroke-dasharray="3 3" stroke-dashoffset="1"/>
<line x1="137.5" y1="110" x2="137.5" y2="683" stroke="#000" stroke-width="1" stroke-dasharray="3 3" stroke-dashoffset="1"/>
<line x1="169.5" y1="110" x2="169.5" y2="683" stroke="#778899" stroke-width="1" stroke-dasharray="3 3" stroke-dashoffset="1"/>
<line x1="201.5" y1="110" x2="201.5" y2="683" stroke="#778899" stroke-width="1" stroke-dasharray="3 3" stroke-dashoffset="1"/>
<line x1="233.5" y1="110" x2="233.5" y2="683" stroke="#778899" stroke-width="1" stroke-dasharray="3 3" stroke-dashoffset="1"/>
<line x1="265.5" y1="110" x2="265.5" y2="683" stroke="#778899" stroke-width="1" stroke-dasharray="3 3" stroke-dashoffset="1"/>
<line x1="297.5" y1="110" x2="297.5" y2="683" stroke="#778899" stroke-width="1" stroke-dasharray="3 3" stroke-dashoffset="1"/>
<line x1="329.5" y1="110" x2="329.5" y2="683" stroke="#778899" stroke-width="1" stroke-dasharray="3 3" stroke-dashoffset="1"/>
<line x1="361.5" y1="110" x2="361.5" y2="683" stroke="#778899" stroke-width="1" stroke-dasharray="3 3" stroke-dashoffset="1"/>
<line x1="393.5" y1="110" x2="393.5" y2="683" stroke="#778899" stroke-width="1" stroke-dasharray="3 3" stroke-dashoffset="1"/>
<line x1="425.5" y1="110" x2="425.5" y2="683" stroke="#778899" stroke-width="1" stroke-dasharray="3 3" stroke-dashoffset="1"/>
<line x1="457.5" y1="110" x2="457.5" y2="683" stroke="#778899" stroke-width="1" stroke-dasharray="3 3" stroke-dashoffset="1"/>
<line x1="489.5" y1="110" x2="489.5" y2="683" stroke="#778899" stroke-width="1" stroke-dasharray="3 3" stroke-dashoffset="1"/>
<line x1="521.5" y1="110" x2="521.5" y2="683" stroke="#000" stroke-width="1" stroke-dasharray="3 3" stroke-dashoffset="1"/>
<line x1="553.5" y1="110" x2="553.5" y2="683" stroke="#778899" stroke-width="1" stroke-dasharray="3 3" stroke-dashoffset="1"/>
<line x1="585.5" y1="110" x2="585.5" y2="683" stroke="#778899" stroke-width="1" stroke-dasharray="3 3" stroke-dashoffset="1"/>
<line x1="617.5" y1="110" x2="617.5" y2="683" stroke="#778899" stroke-width="1" stroke-dasharray="3 3" stroke-dashoffset="1"/>
<line x1="649.5" y1="110" x2="649.5" y2="683" stroke="#778899" stroke-width="1" stroke-dasharray="3 3" stroke-dashoffset="1"/>
<line x1="681.5" y1="110" x2="681.5" y2="683" stroke="#778899" stroke-width="1" stroke-dasharray="3 3" stroke-dashoffset="1"/>
<line x1="713.5" y1="110" x2="713.5" y2="683" stroke="#778899" stroke-width="1" stroke-dasharray="3 3" stroke-dashoffset="1"/>
<line x1="745.5" y1="110" x2="745.5" y2="683" stroke="#778899" stroke-width="1" stroke-dasharray="3 3" stroke-dashoffset="1"/>
<line x1="777.5" y1="110" x2="777.5" y2="683" stroke="#778899" stroke-width="1" stroke-dasharray="3 3" stroke-dashoffset="1"/>
<line x1="809.5" y1="110" x2="809.5" y2="683" stroke="#778899" stroke-width="1" stroke-dasharray="3 3" stroke-dashoffset="1"/>
<line x1="841.5" y1="110" x2="841.5" y2="683" stroke="#778899" stroke-width="1" stroke-dasharray="3 3" stroke-dashoffset="1"/>
<line x1="873.5" y1="110" x2="873.5" y2="683" stroke="#778899" stroke-width="1" stroke-dasharray="3 3" stroke-dashoffset="1"/>
<line x1="905.5" y1="110" x2="905.5" y2="683" stroke="#000" stroke-width="1" stroke-dasharray="3 3" stroke-dashoffset="1"/>
<line x1="937.5" y1="110" x2="937.5" y2="683" stroke="#778899" stroke-width="1" stroke-dasharray="3 3" stroke-dashoffset="1"/>
<line x1="969.5" y1="110" x2="969.5" y2="683" stroke="#778899" stroke-width="1" stroke-dasharray="3 3" stroke-dashoffset="1"/>
<line x1="1001.5" y1="110" x2="1001.5" y2="683" stroke="#778899" stroke-width="1" stroke-dasharray="3 3" stroke-dashoffset="1"/>
<line x1="1033.5" y1="110" x2="1033.5" y2="683" stroke="#778899" stroke-width="1" stroke-dasharray="3 3" stroke-dashoffset="1"/>
<line x1="1065.5" y1="110" x2="1065.5" y2="683" stroke="#778899" stroke-width="1" stroke-dasharray="3 3" stroke-dashoffset="1"/>
<line x1="1097.5" y1="110" x2="1097.5" y2="683" stroke="#778899" stroke-width="1" stroke-dasharray="3 3" stroke-dashoffset="1"/>
<line x1="1129.5" y1="110" x2="1129.5" y2="683" stroke="#778899" stroke-width="1" stroke-dasharray="3 3" stroke-dashoffset="1"/>
<line x1="1161.5" y1="110" x2="1161.5" y2="683" stroke="#778899" stroke-width="1" stroke-dasharray="3 3" stroke-dashoffset="1"/>
<line x1="1193.5" y1="110" x2="1193.5" y2="683" stroke="#778899" stroke-width="1" stroke-dasharray="3 3" stroke-dashoffset="1"/>
<line x1="1225.5" y1="110" x2="1225.5" y2="683" stroke="#778899" stroke-width="1" stroke-dasharray="3 3" stroke-dashoffset="1"/>
<line x1="1257.5" y1="110" x2="1257.5" y2="683" stroke="#778899" stroke-width="1" stroke-dasharray="3 3" stroke-dashoffset="1"/>
<line x1="9" y1="311.5" x2="1239" y2="311.5" stroke="#8493a3" stroke-width="1"/>
<line x1="9" y1="350.5" x2="1239" y2="350.5" stroke="#22c322" stroke-width="1" stroke-dasharray="9 6 3 6" stroke-dashoffset="0"/>
<line x1="9" y1="488.5" x2="1239" y2="488.5" stroke="#22c322" stroke-width="1" stroke-dasharray="9 6 3 6" stroke-dashoffset="0"/>
<line x1="9" y1="516.5" x2="1239" y2="516.5" stroke="#22c322" stroke-width="1" stroke-dasharray="9 6 3 6" stroke-dashoffset="0"/>
<line x1="9" y1="429.5" x2="1239" y2="429.5" stroke="#ff0000" stroke-width="1" stroke-dasharray="9 6 3 6" stroke-dashoffset="0"/>
<rect x="9" y="339" width="79" height="11" fill="#fff" />
<text x="15" y="347.6" font-size="9.8" fill="#000" textLength="73" lengthAdjust="spacingAndGlyphs" stroke="#000" stroke-width="0.2">#569852 sell 0.20</text>
<rect x="9" y="418" width="53" height="11" fill="#fff" />
<text x="15" y="426.6" font-size="9.8" fill="#000" textLength="47" lengthAdjust="spacingAndGlyphs" stroke="#000" stroke-width="0.2">#569852 tp</text>
<rect x="9" y="477" width="79" height="11" fill="#fff" />
<text x="15" y="485.6" font-size="9.8" fill="#000" textLength="73" lengthAdjust="spacingAndGlyphs" stroke="#000" stroke-width="0.2">#566840 sell 0.20</text>
<rect x="9" y="505" width="102" height="11" fill="#fff" />
<text x="15" y="513.6" font-size="9.8" fill="#000" textLength="96" lengthAdjust="spacingAndGlyphs" stroke="#000" stroke-width="0.2">#569863 buy limit 0.20</text>
<line x1="9.5" y1="525" x2="9.5" y2="589" stroke="#000" stroke-width="1"/>
<rect x="4" y="533" width="11" height="53" fill="#000" />
<line x1="25.5" y1="406" x2="25.5" y2="623" stroke="#000" stroke-width="1"/>
<rect x="20.5" y="414.5" width="10" height="172" fill="#fff" stroke="#000" stroke-width="1"/>
<line x1="41.5" y1="382" x2="41.5" y2="473" stroke="#000" stroke-width="1"/>
<rect x="36" y="415" width="11" height="55" fill="#000" />
<line x1="57.5" y1="418" x2="57.5" y2="474" stroke="#000" stroke-width="1"/>
<rect x="52.5" y="451.5" width="10" height="18" fill="#fff" stroke="#000" stroke-width="1"/>
<line x1="73.5" y1="394" x2="73.5" y2="453" stroke="#000" stroke-width="1"/>
<rect x="68.5" y="410.5" width="10" height="40" fill="#fff" stroke="#000" stroke-width="1"/>
<line x1="89.5" y1="406" x2="89.5" y2="454" stroke="#000" stroke-width="1"/>
<rect x="84" y="410" width="11" height="31" fill="#000" />
<line x1="105.5" y1="410" x2="105.5" y2="456" stroke="#000" stroke-width="1"/>
<rect x="100.5" y="432.5" width="10" height="7" fill="#fff" stroke="#000" stroke-width="1"/>
<line x1="121.5" y1="421" x2="121.5" y2="454" stroke="#000" stroke-width="1"/>
<rect x="116" y="431" width="11" height="18" fill="#000" />
<line x1="137.5" y1="415" x2="137.5" y2="454" stroke="#000" stroke-width="1"/>
<rect x="132.5" y="446.5" width="10" height="3" fill="#fff" stroke="#000" stroke-width="1"/>
<line x1="153.5" y1="420" x2="153.5" y2="449" stroke="#000" stroke-width="1"/>
<rect x="148.5" y="423.5" width="10" height="24" fill="#fff" stroke="#000" stroke-width="1"/>
<line x1="169.5" y1="419" x2="169.5" y2="454" stroke="#000" stroke-width="1"/>
<rect x="164" y="424" width="11" height="13" fill="#000" />
<line x1="185.5" y1="421" x2="185.5" y2="451" stroke="#000" stroke-width="1"/>
<rect x="180" y="436" width="11" height="13" fill="#000" />
<line x1="201.5" y1="417" x2="201.5" y2="449" stroke="#000" stroke-width="1"/>
<rect x="196.5" y="424.5" width="10" height="22" fill="#fff" stroke="#000" stroke-width="1"/>
<line x1="217.5" y1="357" x2="217.5" y2="447" stroke="#000" stroke-width="1"/>
<rect x="212.5" y="364.5" width="10" height="60" fill="#fff" stroke="#000" stroke-width="1"/>
<line x1="233.5" y1="242" x2="233.5" y2="365" stroke="#000" stroke-width="1"/>
<rect x="228.5" y="244.5" width="10" height="120" fill="#fff" stroke="#000" stroke-width="1"/>
<line x1="249.5" y1="230" x2="249.5" y2="294" stroke="#000" stroke-width="1"/>
<rect x="244" y="244" width="11" height="13" fill="#000" />
<line x1="265.5" y1="239" x2="265.5" y2="292" stroke="#000" stroke-width="1"/>
<rect x="260" y="256" width="11" height="24" fill="#000" />
<line x1="281.5" y1="213" x2="281.5" y2="311" stroke="#000" stroke-width="1"/>
<rect x="276.5" y="219.5" width="10" height="60" fill="#fff" stroke="#000" stroke-width="1"/>
<line x1="297.5" y1="183" x2="297.5" y2="273" stroke="#000" stroke-width="1"/>
<rect x="292" y="218" width="11" height="44" fill="#000" />
<line x1="313.5" y1="227" x2="313.5" y2="357" stroke="#000" stroke-width="1"/>
<rect x="308" y="263" width="11" height="20" fill="#000" />
<line x1="329.5" y1="194" x2="329.5" y2="307" stroke="#000" stroke-width="1"/>
<rect x="324.5" y="263.5" width="10" height="18" fill="#fff" stroke="#000" stroke-width="1"/>
<line x1="345.5" y1="233" x2="345.5" y2="292" stroke="#000" stroke-width="1"/>
<rect x="340" y="263" width="11" height="26" fill="#000" />
<line x1="361.5" y1="257" x2="361.5" y2="304" stroke="#000" stroke-width="1"/>
<rect x="356" y="288" width="11" height="2" fill="#000" />
<line x1="377.5" y1="232" x2="377.5" y2="295" stroke="#000" stroke-width="1"/>
<rect x="372.5" y="261.5" width="10" height="27" fill="#fff" stroke="#000" stroke-width="1"/>
<line x1="393.5" y1="231" x2="393.5" y2="361" stroke="#000" stroke-width="1"/>
<rect x="388" y="261" width="11" height="78" fill="#000" />
<line x1="409.5" y1="303" x2="409.5" y2="428" stroke="#000" stroke-width="1"/>
<rect x="404" y="355" width="11" height="26" fill="#000" />
<line x1="425.5" y1="335" x2="425.5" y2="392" stroke="#000" stroke-width="1"/>
<rect x="420.5" y="368.5" width="10" height="12" fill="#fff" stroke="#000" stroke-width="1"/>
<line x1="441.5" y1="363" x2="441.5" y2="419" stroke="#000" stroke-width="1"/>
<rect x="436" y="368" width="11" height="23" fill="#000" />
<line x1="457.5" y1="367" x2="457.5" y2="412" stroke="#000" stroke-width="1"/>
<rect x="452.5" y="385.5" width="10" height="5" fill="#fff" stroke="#000" stroke-width="1"/>
<line x1="473.5" y1="376" x2="473.5" y2="421" stroke="#000" stroke-width="1"/>
<rect x="468" y="386" width="11" height="17" fill="#000" />
<line x1="489.5" y1="362" x2="489.5" y2="406" stroke="#000" stroke-width="1"/>
<rect x="484.5" y="373.5" width="10" height="28" fill="#fff" stroke="#000" stroke-width="1"/>
<line x1="505.5" y1="371" x2="505.5" y2="416" stroke="#000" stroke-width="1"/>
<rect x="500" y="373" width="11" height="35" fill="#000" />
<line x1="521.5" y1="396" x2="521.5" y2="424" stroke="#000" stroke-width="1"/>
<rect x="516" y="407" width="11" height="17" fill="#000" />
<line x1="537.5" y1="393" x2="537.5" y2="424" stroke="#000" stroke-width="1"/>
<rect x="532.5" y="404.5" width="10" height="19" fill="#fff" stroke="#000" stroke-width="1"/>
<line x1="553.5" y1="403" x2="553.5" y2="437" stroke="#000" stroke-width="1"/>
<rect x="548" y="405" width="11" height="16" fill="#000" />
<line x1="569.5" y1="417" x2="569.5" y2="504" stroke="#000" stroke-width="1"/>
<rect x="564" y="421" width="11" height="83" fill="#000" />
<line x1="585.5" y1="476" x2="585.5" y2="522" stroke="#000" stroke-width="1"/>
<rect x="580" y="503" width="11" height="13" fill="#000" />
<line x1="601.5" y1="464" x2="601.5" y2="514" stroke="#000" stroke-width="1"/>
<rect x="596.5" y="471.5" width="10" height="42" fill="#fff" stroke="#000" stroke-width="1"/>
<line x1="617.5" y1="465" x2="617.5" y2="489" stroke="#000" stroke-width="1"/>
<rect x="612" y="471" width="11" height="18" fill="#000" />
<line x1="633.5" y1="468" x2="633.5" y2="489" stroke="#000" stroke-width="1"/>
<rect x="628.5" y="479.5" width="10" height="7" fill="#fff" stroke="#000" stroke-width="1"/>
<line x1="649.5" y1="457" x2="649.5" y2="484" stroke="#000" stroke-width="1"/>
<rect x="644.5" y="468.5" width="10" height="11" fill="#fff" stroke="#000" stroke-width="1"/>
<line x1="665.5" y1="424" x2="665.5" y2="478" stroke="#000" stroke-width="1"/>
<rect x="660.5" y="463.5" width="10" height="6" fill="#fff" stroke="#000" stroke-width="1"/>
<line x1="681.5" y1="364" x2="681.5" y2="477" stroke="#000" stroke-width="1"/>
<rect x="676.5" y="378.5" width="10" height="85" fill="#fff" stroke="#000" stroke-width="1"/>
<line x1="697.5" y1="334" x2="697.5" y2="426" stroke="#000" stroke-width="1"/>
<rect x="692.5" y="335.5" width="10" height="43" fill="#fff" stroke="#000" stroke-width="1"/>
<line x1="713.5" y1="294" x2="713.5" y2="358" stroke="#000" stroke-width="1"/>
<rect x="708.5" y="328.5" width="10" height="6" fill="#fff" stroke="#000" stroke-width="1"/>
<line x1="729.5" y1="313" x2="729.5" y2="391" stroke="#000" stroke-width="1"/>
<rect x="724" y="328" width="11" height="60" fill="#000" />
<line x1="745.5" y1="370" x2="745.5" y2="419" stroke="#000" stroke-width="1"/>
<rect x="740" y="387" width="11" height="23" fill="#000" />
<line x1="761.5" y1="224" x2="761.5" y2="410" stroke="#000" stroke-width="1"/>
<rect x="756.5" y="224.5" width="10" height="185" fill="#fff" stroke="#000" stroke-width="1"/>
<line x1="777.5" y1="216" x2="777.5" y2="283" stroke="#000" stroke-width="1"/>
<rect x="772" y="224" width="11" height="16" fill="#000" />
<line x1="793.5" y1="217" x2="793.5" y2="302" stroke="#000" stroke-width="1"/>
<rect x="788" y="239" width="11" height="56" fill="#000" />
<line x1="809.5" y1="260" x2="809.5" y2="318" stroke="#000" stroke-width="1"/>
<rect x="804" y="294" width="11" height="22" fill="#000" />
<line x1="825.5" y1="298" x2="825.5" y2="334" stroke="#000" stroke-width="1"/>
<rect x="820" y="314" width="11" height="11" fill="#000" />
<line x1="841.5" y1="319" x2="841.5" y2="370" stroke="#000" stroke-width="1"/>
<rect x="836" y="319" width="11" height="32" fill="#000" />
<line x1="857.5" y1="319" x2="857.5" y2="361" stroke="#000" stroke-width="1"/>
<rect x="852.5" y="319.5" width="10" height="32" fill="#fff" stroke="#000" stroke-width="1"/>
<line x1="873.5" y1="277" x2="873.5" y2="326" stroke="#000" stroke-width="1"/>
<rect x="868.5" y="281.5" width="10" height="39" fill="#fff" stroke="#000" stroke-width="1"/>
<line x1="889.5" y1="280" x2="889.5" y2="324" stroke="#000" stroke-width="1"/>
<rect x="884" y="281" width="11" height="31" fill="#000" />
<line x1="905.5" y1="278" x2="905.5" y2="323" stroke="#000" stroke-width="1"/>
<rect x="900.5" y="290.5" width="10" height="23" fill="#fff" stroke="#000" stroke-width="1"/>
<line x1="921.5" y1="287" x2="921.5" y2="312" stroke="#000" stroke-width="1"/>
<rect x="916" y="289" width="11" height="18" fill="#000" />
<line x1="937.5" y1="265" x2="937.5" y2="316" stroke="#000" stroke-width="1"/>
<rect x="932.5" y="267.5" width="10" height="39" fill="#fff" stroke="#000" stroke-width="1"/>
<line x1="953.5" y1="266" x2="953.5" y2="321" stroke="#000" stroke-width="1"/>
<rect x="948" y="266" width="11" height="46" fill="#000" />
<g transform="translate(41,367)"><path d="M0.5,0 L-6,9.5 L-3.5,9.5 L0.5,6.2 Z" fill="#dc143c"/><path d="M0.5,0.5 L6.5,9.5 M0.5,6 L5,8" fill="none" stroke="#dc143c" stroke-width="1"/></g>
<g transform="translate(297,168)"><path d="M0.5,0 L-6,9.5 L-3.5,9.5 L0.5,6.2 Z" fill="#dc143c"/><path d="M0.5,0.5 L6.5,9.5 M0.5,6 L5,8" fill="none" stroke="#dc143c" stroke-width="1"/></g>
<g transform="translate(393,217)"><path d="M0.5,0 L-6,9.5 L-3.5,9.5 L0.5,6.2 Z" fill="#dc143c"/><path d="M0.5,0.5 L6.5,9.5 M0.5,6 L5,8" fill="none" stroke="#dc143c" stroke-width="1"/></g>
<g transform="translate(489,348)"><path d="M0.5,0 L-6,9.5 L-3.5,9.5 L0.5,6.2 Z" fill="#dc143c"/><path d="M0.5,0.5 L6.5,9.5 M0.5,6 L5,8" fill="none" stroke="#dc143c" stroke-width="1"/></g>
<g transform="translate(713,280)"><path d="M0.5,0 L-6,9.5 L-3.5,9.5 L0.5,6.2 Z" fill="#dc143c"/><path d="M0.5,0.5 L6.5,9.5 M0.5,6 L5,8" fill="none" stroke="#dc143c" stroke-width="1"/></g>
<g transform="translate(777,202)"><path d="M0.5,0 L-6,9.5 L-3.5,9.5 L0.5,6.2 Z" fill="#dc143c"/><path d="M0.5,0.5 L6.5,9.5 M0.5,6 L5,8" fill="none" stroke="#dc143c" stroke-width="1"/></g>
<g transform="translate(873,263)"><path d="M0.5,0 L-6,9.5 L-3.5,9.5 L0.5,6.2 Z" fill="#dc143c"/><path d="M0.5,0.5 L6.5,9.5 M0.5,6 L5,8" fill="none" stroke="#dc143c" stroke-width="1"/></g>
<g transform="translate(26,636) rotate(180)"><path d="M0.5,0 L-6,9.5 L-3.5,9.5 L0.5,6.2 Z" fill="#dc143c"/><path d="M0.5,0.5 L6.5,9.5 M0.5,6 L5,8" fill="none" stroke="#dc143c" stroke-width="1"/></g>
<g transform="translate(106,469) rotate(180)"><path d="M0.5,0 L-6,9.5 L-3.5,9.5 L0.5,6.2 Z" fill="#dc143c"/><path d="M0.5,0.5 L6.5,9.5 M0.5,6 L5,8" fill="none" stroke="#dc143c" stroke-width="1"/></g>
<g transform="translate(170,467) rotate(180)"><path d="M0.5,0 L-6,9.5 L-3.5,9.5 L0.5,6.2 Z" fill="#dc143c"/><path d="M0.5,0.5 L6.5,9.5 M0.5,6 L5,8" fill="none" stroke="#dc143c" stroke-width="1"/></g>
<g transform="translate(314,369) rotate(180)"><path d="M0.5,0 L-6,9.5 L-3.5,9.5 L0.5,6.2 Z" fill="#dc143c"/><path d="M0.5,0.5 L6.5,9.5 M0.5,6 L5,8" fill="none" stroke="#dc143c" stroke-width="1"/></g>
<g transform="translate(410,441) rotate(180)"><path d="M0.5,0 L-6,9.5 L-3.5,9.5 L0.5,6.2 Z" fill="#dc143c"/><path d="M0.5,0.5 L6.5,9.5 M0.5,6 L5,8" fill="none" stroke="#dc143c" stroke-width="1"/></g>
<g transform="translate(474,434) rotate(180)"><path d="M0.5,0 L-6,9.5 L-3.5,9.5 L0.5,6.2 Z" fill="#dc143c"/><path d="M0.5,0.5 L6.5,9.5 M0.5,6 L5,8" fill="none" stroke="#dc143c" stroke-width="1"/></g>
<g transform="translate(586,536) rotate(180)"><path d="M0.5,0 L-6,9.5 L-3.5,9.5 L0.5,6.2 Z" fill="#dc143c"/><path d="M0.5,0.5 L6.5,9.5 M0.5,6 L5,8" fill="none" stroke="#dc143c" stroke-width="1"/></g>
<g transform="translate(746,432) rotate(180)"><path d="M0.5,0 L-6,9.5 L-3.5,9.5 L0.5,6.2 Z" fill="#dc143c"/><path d="M0.5,0.5 L6.5,9.5 M0.5,6 L5,8" fill="none" stroke="#dc143c" stroke-width="1"/></g>
<g transform="translate(842,383) rotate(180)"><path d="M0.5,0 L-6,9.5 L-3.5,9.5 L0.5,6.2 Z" fill="#dc143c"/><path d="M0.5,0.5 L6.5,9.5 M0.5,6 L5,8" fill="none" stroke="#dc143c" stroke-width="1"/></g>
<polyline fill="none" stroke="#0000ff" stroke-width="3" stroke-linejoin="round" points="9.5,546 25.5,534 41.5,528 57.5,524.4 73.5,519.2 89.5,514.8 105.5,511.4 121.5,508.4 137.5,506 153.5,501.4 169.5,496 185.5,490 201.5,477 217.5,467.5 233.5,450.5 249.5,432.5 265.5,416.5 281.5,398.7 297.5,380.8 313.5,375 329.5,364.3 345.5,353 361.5,348.7 377.5,337.6 393.5,332 409.5,328.4 425.5,324 441.5,322 457.5,319.3 473.5,316.4 489.5,313.4 505.5,316 521.5,326.8 537.5,333.8 553.5,341.8 569.5,357.7 585.5,372.7 601.5,381 617.5,395 633.5,405 649.5,416 665.5,427 681.5,429 697.5,426.3 713.5,424.3 729.5,424.2 745.5,425.5 761.5,415 777.5,408 793.5,401.8 809.5,396 825.5,391 841.5,387.6 857.5,377.6 873.5,364.3 889.5,355 905.5,343 921.5,335.2 937.5,322.7 953.5,315.5"/>
<polyline fill="none" stroke="#ff0000" stroke-width="2.2" stroke-linejoin="miter" points="-7,618 297.5,183.5 585.5,521.5 777.5,216.5"/>
<line x1="9" y1="342.0" x2="1239" y2="342.0" stroke="#ff0000" stroke-width="2"/>
<line x1="9" y1="471.0" x2="1239" y2="471.0" stroke="#0000ff" stroke-width="2"/>
<line x1="9" y1="609.0" x2="1239" y2="609.0" stroke="#0000ff" stroke-width="2"/>
<polyline fill="none" stroke="#0000c0" stroke-width="2" points="969.5,312 1017.5,413.5 1050,342.5 1129.5,533.5"/>
<path d="M1109.5,349.5 H1116.5 V360.5 H1121.5 L1113.5,368.5 L1105.5,360.5 H1109.5 Z" fill="none" stroke="#ff0000" stroke-width="1"/>
<rect x="987" y="110" width="9" height="1" fill="#7b8a9c" />
<rect x="988" y="111" width="7" height="1" fill="#7b8a9c" />
<rect x="989" y="112" width="5" height="1" fill="#7b8a9c" />
<rect x="990" y="113" width="3" height="1" fill="#7b8a9c" />
<rect x="991" y="114" width="1" height="1" fill="#7b8a9c" />
</g>
<line x1="8" y1="109.5" x2="1240" y2="109.5" stroke="#000" stroke-width="1"/>
<line x1="8" y1="683.5" x2="1240" y2="683.5" stroke="#000" stroke-width="1"/>
<line x1="8.5" y1="109" x2="8.5" y2="684" stroke="#000" stroke-width="1"/>
<line x1="1239.5" y1="109" x2="1239.5" y2="684" stroke="#000" stroke-width="1"/>
<rect x="12" y="116" width="7" height="1" fill="#000" />
<rect x="13" y="117" width="5" height="1" fill="#000" />
<rect x="14" y="118" width="3" height="1" fill="#000" />
<rect x="15" y="119" width="1" height="1" fill="#000" />
<rect x="24" y="112" width="201" height="10" fill="#fff" />
<text x="24" y="120.6" font-size="9.8" fill="#000" textLength="53" lengthAdjust="spacingAndGlyphs" stroke="#000" stroke-width="0.2">GBPUSD,H1</text>
<text x="84.6" y="120.6" font-size="9.8" fill="#000" textLength="31" lengthAdjust="spacingAndGlyphs" stroke="#000" stroke-width="0.2">1.62361</text>
<text x="120.6" y="120.6" font-size="9.8" fill="#000" textLength="31" lengthAdjust="spacingAndGlyphs" stroke="#000" stroke-width="0.2">1.62361</text>
<text x="156.6" y="120.6" font-size="9.8" fill="#000" textLength="31" lengthAdjust="spacingAndGlyphs" stroke="#000" stroke-width="0.2">1.62207</text>
<text x="192.6" y="120.6" font-size="9.8" fill="#000" textLength="31" lengthAdjust="spacingAndGlyphs" stroke="#000" stroke-width="0.2">1.62233</text>
<line x1="1240" y1="117.5" x2="1242" y2="117.5" stroke="#000" stroke-width="1"/>
<text x="1245.6" y="119.3" font-size="9.8" fill="#000" textLength="31.5" lengthAdjust="spacingAndGlyphs" stroke="#000" stroke-width="0.2">1.62790</text>
<line x1="1240" y1="150.5" x2="1242" y2="150.5" stroke="#000" stroke-width="1"/>
<text x="1245.6" y="152.3" font-size="9.8" fill="#000" textLength="31.5" lengthAdjust="spacingAndGlyphs" stroke="#000" stroke-width="0.2">1.62695</text>
<line x1="1240" y1="183.5" x2="1242" y2="183.5" stroke="#000" stroke-width="1"/>
<text x="1245.6" y="185.3" font-size="9.8" fill="#000" textLength="31.5" lengthAdjust="spacingAndGlyphs" stroke="#000" stroke-width="0.2">1.62600</text>
<line x1="1240" y1="216.5" x2="1242" y2="216.5" stroke="#000" stroke-width="1"/>
<text x="1245.6" y="218.3" font-size="9.8" fill="#000" textLength="31.5" lengthAdjust="spacingAndGlyphs" stroke="#000" stroke-width="0.2">1.62505</text>
<line x1="1240" y1="249.5" x2="1242" y2="249.5" stroke="#000" stroke-width="1"/>
<text x="1245.6" y="251.3" font-size="9.8" fill="#000" textLength="31.5" lengthAdjust="spacingAndGlyphs" stroke="#000" stroke-width="0.2">1.62410</text>
<line x1="1240" y1="282.5" x2="1242" y2="282.5" stroke="#000" stroke-width="1"/>
<text x="1245.6" y="284.3" font-size="9.8" fill="#000" textLength="31.5" lengthAdjust="spacingAndGlyphs" stroke="#000" stroke-width="0.2">1.62315</text>
<line x1="1240" y1="315.5" x2="1242" y2="315.5" stroke="#000" stroke-width="1"/>
<text x="1245.6" y="317.3" font-size="9.8" fill="#000" textLength="31.5" lengthAdjust="spacingAndGlyphs" stroke="#000" stroke-width="0.2">1.62220</text>
<line x1="1240" y1="348.5" x2="1242" y2="348.5" stroke="#000" stroke-width="1"/>
<text x="1245.6" y="350.3" font-size="9.8" fill="#000" textLength="31.5" lengthAdjust="spacingAndGlyphs" stroke="#000" stroke-width="0.2">1.62125</text>
<line x1="1240" y1="381.5" x2="1242" y2="381.5" stroke="#000" stroke-width="1"/>
<text x="1245.6" y="383.3" font-size="9.8" fill="#000" textLength="31.5" lengthAdjust="spacingAndGlyphs" stroke="#000" stroke-width="0.2">1.62030</text>
<line x1="1240" y1="414.5" x2="1242" y2="414.5" stroke="#000" stroke-width="1"/>
<text x="1245.6" y="416.3" font-size="9.8" fill="#000" textLength="31.5" lengthAdjust="spacingAndGlyphs" stroke="#000" stroke-width="0.2">1.61935</text>
<line x1="1240" y1="448.5" x2="1242" y2="448.5" stroke="#000" stroke-width="1"/>
<text x="1245.6" y="450.3" font-size="9.8" fill="#000" textLength="31.5" lengthAdjust="spacingAndGlyphs" stroke="#000" stroke-width="0.2">1.61835</text>
<line x1="1240" y1="481.5" x2="1242" y2="481.5" stroke="#000" stroke-width="1"/>
<text x="1245.6" y="483.3" font-size="9.8" fill="#000" textLength="31.5" lengthAdjust="spacingAndGlyphs" stroke="#000" stroke-width="0.2">1.61740</text>
<line x1="1240" y1="514.5" x2="1242" y2="514.5" stroke="#000" stroke-width="1"/>
<text x="1245.6" y="516.3" font-size="9.8" fill="#000" textLength="31.5" lengthAdjust="spacingAndGlyphs" stroke="#000" stroke-width="0.2">1.61645</text>
<line x1="1240" y1="547.5" x2="1242" y2="547.5" stroke="#000" stroke-width="1"/>
<text x="1245.6" y="549.3" font-size="9.8" fill="#000" textLength="31.5" lengthAdjust="spacingAndGlyphs" stroke="#000" stroke-width="0.2">1.61550</text>
<line x1="1240" y1="580.5" x2="1242" y2="580.5" stroke="#000" stroke-width="1"/>
<text x="1245.6" y="582.3" font-size="9.8" fill="#000" textLength="31.5" lengthAdjust="spacingAndGlyphs" stroke="#000" stroke-width="0.2">1.61455</text>
<line x1="1240" y1="613.5" x2="1242" y2="613.5" stroke="#000" stroke-width="1"/>
<text x="1245.6" y="615.3" font-size="9.8" fill="#000" textLength="31.5" lengthAdjust="spacingAndGlyphs" stroke="#000" stroke-width="0.2">1.61360</text>
<line x1="1240" y1="646.5" x2="1242" y2="646.5" stroke="#000" stroke-width="1"/>
<text x="1245.6" y="648.3" font-size="9.8" fill="#000" textLength="31.5" lengthAdjust="spacingAndGlyphs" stroke="#000" stroke-width="0.2">1.61265</text>
<line x1="1240" y1="679.5" x2="1242" y2="679.5" stroke="#000" stroke-width="1"/>
<text x="1245.6" y="681.3" font-size="9.8" fill="#000" textLength="31.5" lengthAdjust="spacingAndGlyphs" stroke="#000" stroke-width="0.2">1.61170</text>
<rect x="1242" y="305" width="39" height="11" fill="#000" />
<text x="1245.6" y="313.3" font-size="9.8" fill="#fff" textLength="31.5" lengthAdjust="spacingAndGlyphs" stroke="#fff" stroke-width="0.2">1.62233</text>
<rect x="1242" y="336" width="39" height="11" fill="#ff0000" />
<text x="1245.6" y="344.3" font-size="9.8" fill="#fff" textLength="31.5" lengthAdjust="spacingAndGlyphs" stroke="#fff" stroke-width="0.2">1.62142</text>
<rect x="1242" y="465" width="39" height="11" fill="#0000ff" />
<text x="1245.6" y="473.3" font-size="9.8" fill="#fff" textLength="31.5" lengthAdjust="spacingAndGlyphs" stroke="#fff" stroke-width="0.2">1.61771</text>
<rect x="1242" y="603" width="39" height="11" fill="#0000ff" />
<text x="1245.6" y="611.3" font-size="9.8" fill="#fff" textLength="31.5" lengthAdjust="spacingAndGlyphs" stroke="#fff" stroke-width="0.2">1.61373</text>
<line x1="9.5" y1="684" x2="9.5" y2="687" stroke="#000" stroke-width="1"/>
<text x="8" y="696" font-size="9.8" fill="#000" textLength="51" lengthAdjust="spacingAndGlyphs" stroke="#000" stroke-width="0.2">30 Sep 2013</text>
<line x1="73.5" y1="684" x2="73.5" y2="687" stroke="#000" stroke-width="1"/>
<text x="72" y="696" font-size="9.8" fill="#000" textLength="54" lengthAdjust="spacingAndGlyphs" stroke="#000" stroke-width="0.2">30 Sep 20:00</text>
<line x1="137.5" y1="684" x2="137.5" y2="687" stroke="#000" stroke-width="1"/>
<text x="136" y="696" font-size="9.8" fill="#000" textLength="48" lengthAdjust="spacingAndGlyphs" stroke="#000" stroke-width="0.2">1 Oct 00:00</text>
<line x1="201.5" y1="684" x2="201.5" y2="687" stroke="#000" stroke-width="1"/>
<text x="200" y="696" font-size="9.8" fill="#000" textLength="48" lengthAdjust="spacingAndGlyphs" stroke="#000" stroke-width="0.2">1 Oct 04:00</text>
<line x1="265.5" y1="684" x2="265.5" y2="687" stroke="#000" stroke-width="1"/>
<text x="264" y="696" font-size="9.8" fill="#000" textLength="48" lengthAdjust="spacingAndGlyphs" stroke="#000" stroke-width="0.2">1 Oct 08:00</text>
<line x1="329.5" y1="684" x2="329.5" y2="687" stroke="#000" stroke-width="1"/>
<text x="328" y="696" font-size="9.8" fill="#000" textLength="48" lengthAdjust="spacingAndGlyphs" stroke="#000" stroke-width="0.2">1 Oct 12:00</text>
<line x1="393.5" y1="684" x2="393.5" y2="687" stroke="#000" stroke-width="1"/>
<text x="392" y="696" font-size="9.8" fill="#000" textLength="48" lengthAdjust="spacingAndGlyphs" stroke="#000" stroke-width="0.2">1 Oct 16:00</text>
<line x1="457.5" y1="684" x2="457.5" y2="687" stroke="#000" stroke-width="1"/>
<text x="456" y="696" font-size="9.8" fill="#000" textLength="48" lengthAdjust="spacingAndGlyphs" stroke="#000" stroke-width="0.2">1 Oct 20:00</text>
<line x1="521.5" y1="684" x2="521.5" y2="687" stroke="#000" stroke-width="1"/>
<text x="520" y="696" font-size="9.8" fill="#000" textLength="48" lengthAdjust="spacingAndGlyphs" stroke="#000" stroke-width="0.2">2 Oct 00:00</text>
<line x1="585.5" y1="684" x2="585.5" y2="687" stroke="#000" stroke-width="1"/>
<text x="584" y="696" font-size="9.8" fill="#000" textLength="48" lengthAdjust="spacingAndGlyphs" stroke="#000" stroke-width="0.2">2 Oct 04:00</text>
<line x1="649.5" y1="684" x2="649.5" y2="687" stroke="#000" stroke-width="1"/>
<text x="648" y="696" font-size="9.8" fill="#000" textLength="48" lengthAdjust="spacingAndGlyphs" stroke="#000" stroke-width="0.2">2 Oct 08:00</text>
<line x1="713.5" y1="684" x2="713.5" y2="687" stroke="#000" stroke-width="1"/>
<text x="712" y="696" font-size="9.8" fill="#000" textLength="48" lengthAdjust="spacingAndGlyphs" stroke="#000" stroke-width="0.2">2 Oct 12:00</text>
<line x1="777.5" y1="684" x2="777.5" y2="687" stroke="#000" stroke-width="1"/>
<text x="776" y="696" font-size="9.8" fill="#000" textLength="48" lengthAdjust="spacingAndGlyphs" stroke="#000" stroke-width="0.2">2 Oct 16:00</text>
<line x1="841.5" y1="684" x2="841.5" y2="687" stroke="#000" stroke-width="1"/>
<text x="840" y="696" font-size="9.8" fill="#000" textLength="48" lengthAdjust="spacingAndGlyphs" stroke="#000" stroke-width="0.2">2 Oct 20:00</text>
<line x1="905.5" y1="684" x2="905.5" y2="687" stroke="#000" stroke-width="1"/>
<text x="904" y="696" font-size="9.8" fill="#000" textLength="48" lengthAdjust="spacingAndGlyphs" stroke="#000" stroke-width="0.2">3 Oct 00:00</text>
<rect x="4" y="702" width="1280" height="46" fill="#e0e0e0" />
<rect x="1282" y="107" width="2" height="637" fill="#f2f2f2" />
<rect x="4" y="702" width="1280" height="1" fill="#f4f4f4" />
<rect x="5" y="703" width="1279" height="1" fill="#000" />
<rect x="4" y="703" width="1" height="20" fill="#fafafa" />
<rect x="5" y="703" width="2" height="19" fill="#85857b" />
<rect x="88" y="703" width="80" height="19" fill="#fff" />
<rect x="88" y="703" width="1" height="19" fill="#000" />
<rect x="167" y="703" width="1" height="19" fill="#000" />
<rect x="88" y="721" width="80" height="1" fill="#000" />
<rect x="89" y="722" width="80" height="1" fill="#8a8a8a" />
<rect x="168" y="704" width="1" height="19" fill="#8a8a8a" />
<g shape-rendering="auto">
<text x="18.5" y="715.8" font-size="11" fill="#7d7d70" textLength="56" lengthAdjust="spacingAndGlyphs" >EURUSD,H1</text>
<text x="99.5" y="715.8" font-size="11" fill="#000" textLength="54.5" lengthAdjust="spacingAndGlyphs" >GBPUSD,H1</text>
<text x="179.5" y="715.8" font-size="11" fill="#7d7d70" textLength="63.5" lengthAdjust="spacingAndGlyphs" >EURJPY,Daily</text>
<text x="267" y="715.8" font-size="11" fill="#7d7d70" textLength="51.5" lengthAdjust="spacingAndGlyphs" >GBPJPY,H1</text>
<text x="342.5" y="715.8" font-size="11" fill="#7d7d70" textLength="57" lengthAdjust="spacingAndGlyphs" >AUDUSD,H1</text>
<text x="423" y="715.8" font-size="11" fill="#7d7d70" textLength="55.5" lengthAdjust="spacingAndGlyphs" >NZDUSD,H1</text>
<text x="503" y="715.8" font-size="11" fill="#7d7d70" textLength="56" lengthAdjust="spacingAndGlyphs" >USDCHF,H4</text>
<text x="582.5" y="715.8" font-size="11" fill="#7d7d70" textLength="53.5" lengthAdjust="spacingAndGlyphs" >USDJPY,H1</text>
<text x="658.5" y="715.8" font-size="11" fill="#7d7d70" textLength="57" lengthAdjust="spacingAndGlyphs" >USDCAD,H1</text>
<text x="739.5" y="715.8" font-size="11" fill="#7d7d70" textLength="55" lengthAdjust="spacingAndGlyphs" >GBPCHF,H1</text>
<text x="819" y="715.8" font-size="11" fill="#7d7d70" textLength="56.5" lengthAdjust="spacingAndGlyphs" >AUDNZD,H4</text>
<text x="899" y="715.8" font-size="11" fill="#7d7d70" textLength="53" lengthAdjust="spacingAndGlyphs" >CHFJPY,H4</text>
</g>
<rect x="256" y="707" width="1" height="12" fill="#85857b" />
<rect x="332" y="707" width="1" height="12" fill="#85857b" />
<rect x="412" y="707" width="1" height="12" fill="#85857b" />
<rect x="492" y="707" width="1" height="12" fill="#85857b" />
<rect x="572" y="707" width="1" height="12" fill="#85857b" />
<rect x="648" y="707" width="1" height="12" fill="#85857b" />
<rect x="728" y="707" width="1" height="12" fill="#85857b" />
<rect x="808" y="707" width="1" height="12" fill="#85857b" />
<rect x="888" y="707" width="1" height="12" fill="#85857b" />
<rect x="964" y="707" width="1" height="12" fill="#85857b" />
<rect x="1258" y="710" width="1" height="7" fill="#a0a0a0" />
<rect x="1273" y="710" width="1" height="7" fill="#a0a0a0" />
<rect x="1257" y="711" width="1" height="5" fill="#a0a0a0" />
<rect x="1274" y="711" width="1" height="5" fill="#a0a0a0" />
<rect x="1256" y="712" width="1" height="3" fill="#a0a0a0" />
<rect x="1275" y="712" width="1" height="3" fill="#a0a0a0" />
<rect x="1255" y="713" width="1" height="1" fill="#a0a0a0" />
<rect x="1276" y="713" width="1" height="1" fill="#a0a0a0" />
<rect x="4" y="723" width="1280" height="1" fill="#f8f8f8" />
<g shape-rendering="auto">
<text x="6" y="739" font-size="11" fill="#000" textLength="128" lengthAdjust="spacingAndGlyphs" >Для справки, нажмите F1</text>
<text x="1178.5" y="739" font-size="11" fill="#000" textLength="42" lengthAdjust="spacingAndGlyphs" >545/0 kb</text>
</g>
<rect x="563" y="727" width="1" height="15" fill="#a2a2a2" />
<rect x="564" y="727" width="1" height="15" fill="#f6f6f6" />
<rect x="672" y="727" width="1" height="15" fill="#a2a2a2" />
<rect x="673" y="727" width="1" height="15" fill="#f6f6f6" />
<rect x="773" y="727" width="1" height="15" fill="#a2a2a2" />
<rect x="774" y="727" width="1" height="15" fill="#f6f6f6" />
<rect x="845" y="727" width="1" height="15" fill="#a2a2a2" />
<rect x="846" y="727" width="1" height="15" fill="#f6f6f6" />
<rect x="916" y="727" width="1" height="15" fill="#a2a2a2" />
<rect x="917" y="727" width="1" height="15" fill="#f6f6f6" />
<rect x="985" y="727" width="1" height="15" fill="#a2a2a2" />
<rect x="986" y="727" width="1" height="15" fill="#f6f6f6" />
<rect x="1056" y="727" width="1" height="15" fill="#a2a2a2" />
<rect x="1057" y="727" width="1" height="15" fill="#f6f6f6" />
<rect x="1122" y="727" width="1" height="15" fill="#a2a2a2" />
<rect x="1123" y="727" width="1" height="15" fill="#f6f6f6" />
<rect x="1128" y="739" width="2" height="2" fill="#aa1e0a" />
<rect x="1128" y="729" width="2" height="9" fill="#5a7d0a" />
<rect x="1131" y="738" width="2" height="3" fill="#aa1e0a" />
<rect x="1131" y="729" width="2" height="8" fill="#5a7d0a" />
<rect x="1134" y="737" width="2" height="4" fill="#aa1e0a" />
<rect x="1134" y="729" width="2" height="7" fill="#5a7d0a" />
<rect x="1137" y="736" width="2" height="5" fill="#aa1e0a" />
<rect x="1137" y="729" width="2" height="6" fill="#5a7d0a" />
<rect x="1140" y="734" width="2" height="7" fill="#aa1e0a" />
<rect x="1140" y="729" width="2" height="4" fill="#5a7d0a" />
<rect x="1143" y="733" width="2" height="8" fill="#aa1e0a" />
<rect x="1143" y="729" width="2" height="3" fill="#5a7d0a" />
<rect x="1146" y="732" width="2" height="9" fill="#aa1e0a" />
<rect x="1146" y="729" width="2" height="2" fill="#5a7d0a" />
<rect x="1149" y="731" width="2" height="10" fill="#aa1e0a" />
<rect x="1149" y="729" width="2" height="1" fill="#5a7d0a" />
<g shape-rendering="auto" stroke="#a8a8a8" stroke-width="1.200"><path d="M1270,743.500 L1283.500,730 M1274,743.500 L1283.500,734 M1278,743.500 L1283.500,738"/></g>
<rect x="4" y="744" width="1280" height="4" fill="#7c7c82" />
<rect x="4" y="744" width="1280" height="1" fill="#55555a" />
<g shape-rendering="auto"><path d="M4,744 H43 L45,748 H4 Z" fill="#f08c1e"/><rect x="4" y="744" width="40" height="1" fill="#c86400"/></g>
<rect x="0" y="0" width="1288" height="4" fill="#fff" />
<rect x="0" y="0" width="4" height="748" fill="#fff" />
<rect x="1284" y="0" width="4" height="748" fill="#fff" />
</svg>
</body></html>
